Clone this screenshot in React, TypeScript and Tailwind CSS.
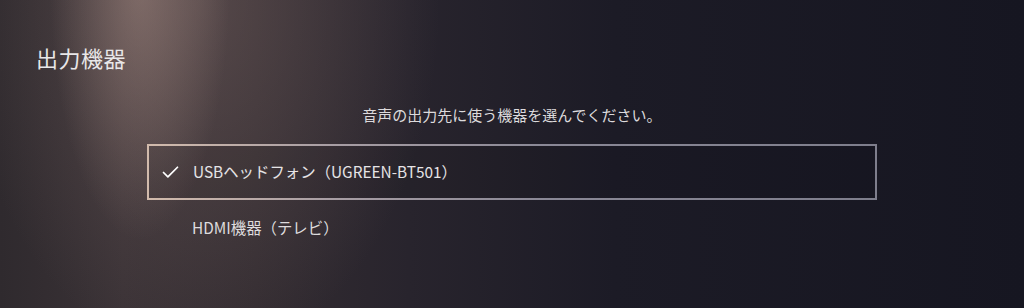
import { Check } from 'lucide-react';

const devices = [
  { id: 'usb', label: 'USBヘッドフォン（UGREEN-BT501）', selected: true },
  { id: 'hdmi', label: 'HDMI機器（テレビ）', selected: false },
];

export default function App() {
  return (
    <div
      className="relative h-[308px] w-[1024px] overflow-hidden text-[#e9e7e8] bg-[radial-gradient(ellipse_90px_260px_at_140px_-20px,rgba(185,155,145,0.45),transparent),radial-gradient(ellipse_240px_360px_at_200px_0px,rgba(130,108,105,0.42),transparent),linear-gradient(to_right,#2f2a2e_0%,#3a3236_12%,#332c31_25%,#28242d_40%,#1c1b26_60%,#161621_100%)]"
      style={{ fontFamily: '"Noto Sans CJK JP", "Noto Sans", sans-serif' }}
    >
      <div className="pl-[36px] pt-[41px]">
        <h1 className="text-[22px] leading-[33px] font-normal tracking-[0.5px]">出力機器</h1>
      </div>

      <p className="mt-[31px] text-center text-[15px] leading-[20px] text-[#dcdadc]">
        音声の出力先に使う機器を選んでください。
      </p>

      <ul className="ml-[147px] mt-[19px] w-[730px]">
        {devices.map((d) =>
          d.selected ? (
            <li
              key={d.id}
              className="flex h-[56px] items-center border-2 [border-image:linear-gradient(to_right,#d2bbac,#a89ea4_25%,#8a8896_55%,#7e7e8c)_1] bg-black/5"
            >
              <Check className="ml-[11px] h-[21px] w-[21px] text-white" strokeWidth={2} />
              <span className="ml-[12px] text-[15.4px] text-[#e6e4e6]">{d.label}</span>
            </li>
          ) : (
            <li key={d.id} className="flex h-[56px] items-center">
              <span className="ml-[45px] text-[15.4px] text-[#dedcde]">{d.label}</span>
            </li>
          )
        )}
      </ul>
    </div>
  );
}
